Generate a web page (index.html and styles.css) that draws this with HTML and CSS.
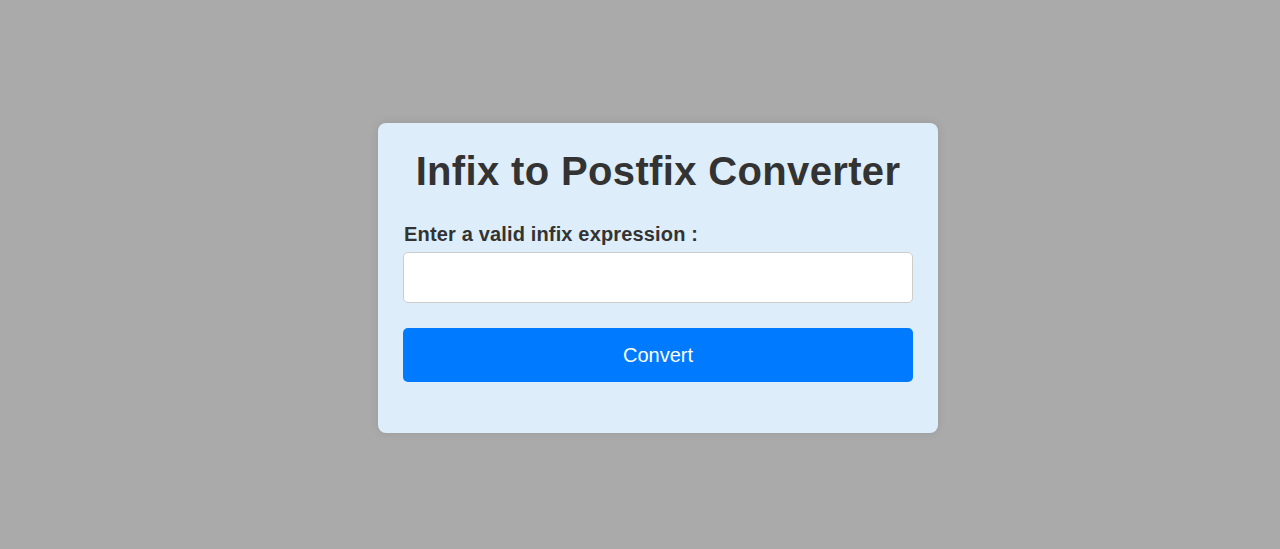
FILE: index.html
```html
<!DOCTYPE html>
<html lang="en">

<head>
    <meta charset="UTF-8">
    <meta name="viewport" content="width=device-width, initial-scale=1.0">
    <link rel="stylesheet" href="styles.css">
    <title>Infix to Postfix Converter</title>
</head>

<body>
    <div class="container">
        <h1>Infix to Postfix Converter</h1>
        <label for="infix">Enter a valid infix expression :</label>
        <input type="text" id="infix" class="expr">
        <button class="convertB">Convert</button>
        <div id="result"></div>
    </div>
</body>

</html>
```

FILE: styles.css
```css
body {
    margin: 0;
    height: 100vh;
    background-color: #aaaaaa;
    font-family: "Liberation Sans", Arial, sans-serif;
    display: flex;
    align-items: center;
    justify-content: center;
    box-sizing: border-box;
    padding-left: 36px;
    padding-top: 7px;
}

.container {
    width: 560px;
    box-sizing: border-box;
    background-color: #ddeefa;
    border-radius: 8px;
    padding: 26px 25px 0 25px;
    box-shadow: 0 0 10px rgba(0, 0, 0, 0.1);
    display: flex;
    flex-direction: column;
}

h1 {
    margin: 0 0 29px 0;
    font-size: 40px;
    letter-spacing: 0.35px;
    color: #333;
    text-align: center;
}

label {
    font-size: 20px;
    font-weight: bold;
    letter-spacing: 0.16px;
    color: #333;
    padding-left: 1px;
}

.expr {
    margin-top: 6px;
    height: 51px;
    box-sizing: border-box;
    border: 1px solid #cccccc;
    border-radius: 5px;
    background: #fff;
    font-size: 18px;
    padding: 0 10px;
}

.convertB {
    margin-top: 25px;
    height: 54px;
    border: none;
    border-radius: 5px;
    background-color: #007bff;
    color: #fff;
    font-family: "Liberation Sans", Arial, sans-serif;
    font-size: 20px;
    cursor: pointer;
}

#result {
    height: 51px;
}
```
